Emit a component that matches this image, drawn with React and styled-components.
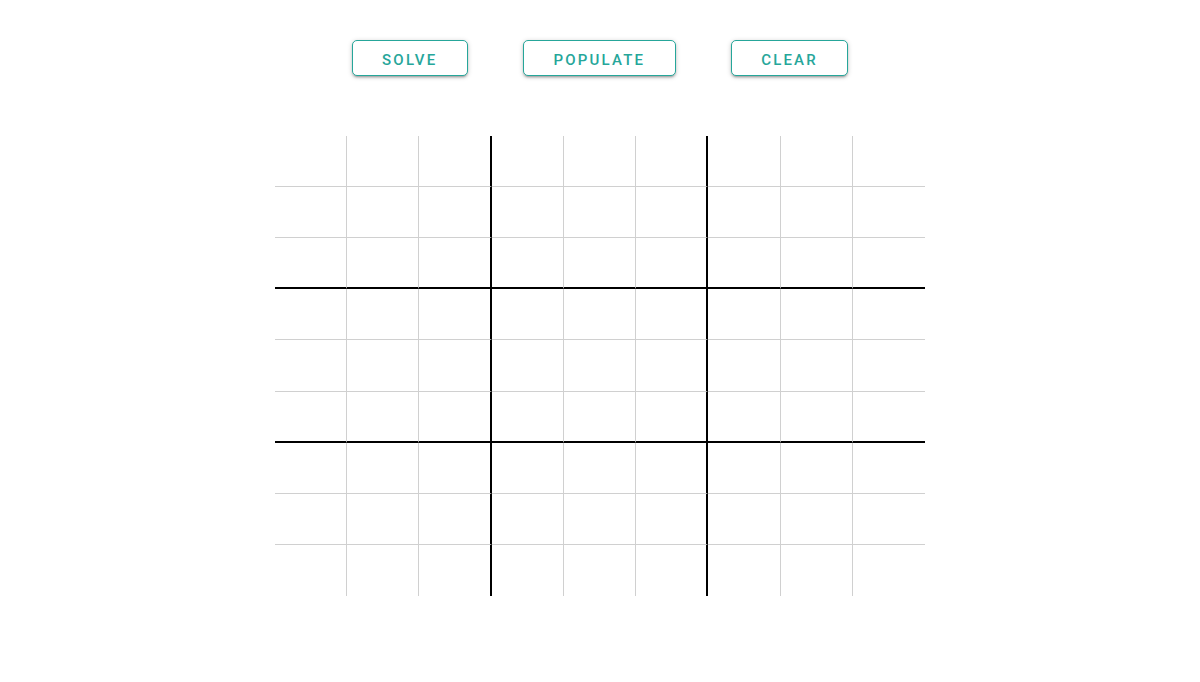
import React from 'react'
import styled, { createGlobalStyle } from 'styled-components'

const GlobalStyle = createGlobalStyle`
  body {
    margin: 0;
    background: #fff;
    font-family: Roboto, "Liberation Sans", Arial, sans-serif;
  }
`

const Page = styled.div`
  display: flex;
  flex-direction: column;
  align-items: center;
  padding-top: 40px;
`

const Toolbar = styled.div`
  display: flex;
  gap: 55px;
  margin-bottom: 60px;
`

const Button = styled.button`
  height: 36px;
  padding: 3px 29.5px 0;
  box-sizing: border-box;
  background: #fff;
  border: 1px solid #26a69a;
  border-radius: 5px;
  color: #26a69a;
  font-family: Roboto, "Liberation Sans", Arial, sans-serif;
  font-weight: 500;
  font-size: 15px;
  letter-spacing: 2.2px;
  text-transform: uppercase;
  box-shadow: 0 2px 2px 0 rgba(0,0,0,0.14), 0 3px 1px -2px rgba(0,0,0,0.12), 0 1px 5px 0 rgba(0,0,0,0.2);
  cursor: pointer;
`

const Board = styled.div`
  display: grid;
  grid-template-columns: repeat(9, 1fr);
  grid-template-rows: repeat(9, 1fr);
  width: 650px;
  height: 460px;
`

const Cell = styled.div`
  box-sizing: border-box;
  border-right: ${p => p.$right === 'thick' ? '2px solid #000' : p.$right === 'thin' ? '1px solid #d0d0d0' : 'none'};
  border-bottom: ${p => p.$bottom === 'thick' ? '2px solid #000' : p.$bottom === 'thin' ? '1px solid #d0d0d0' : 'none'};
`

const edge = i => (i === 8 ? 'none' : i % 3 === 2 ? 'thick' : 'thin')

const App = () => {
  const cells = []
  for (let r = 0; r < 9; r++) {
    for (let c = 0; c < 9; c++) {
      cells.push(<Cell key={`${r}-${c}`} $right={edge(c)} $bottom={edge(r)} />)
    }
  }
  return (
    <>
      <GlobalStyle />
      <Page>
        <Toolbar>
          <Button>Solve</Button>
          <Button>Populate</Button>
          <Button>Clear</Button>
        </Toolbar>
        <Board>{cells}</Board>
      </Page>
    </>
  )
}

export default App
